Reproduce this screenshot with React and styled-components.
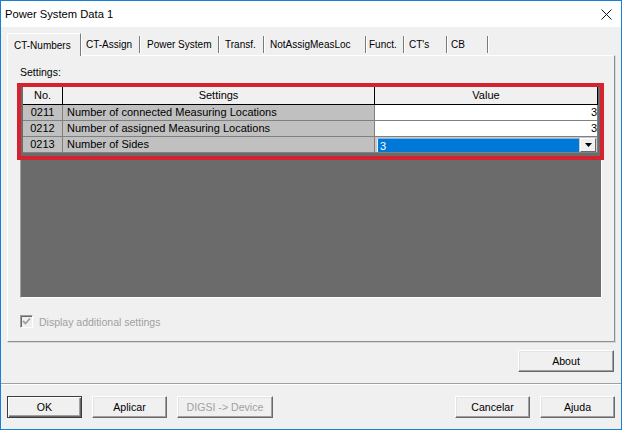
import styled, { createGlobalStyle } from "styled-components";

const GlobalStyle = createGlobalStyle`
  html, body {
    margin: 0;
    padding: 0;
    background: #ffffff;
  }
  body {
    font-family: "Liberation Sans", Arial, sans-serif;
    color: #000;
  }
  * {
    box-sizing: border-box;
  }
`;

const Window = styled.div`
  width: 622px;
  height: 430px;
  border: 1px solid #1a7fd4;
  background: #f0f0f0;
  display: flex;
  flex-direction: column;
`;

const TitleBar = styled.div`
  height: 26px;
  background: #ffffff;
  display: flex;
  align-items: center;
  justify-content: space-between;
  padding: 0 9px 0 4px;
  font-size: 11.2px;
  color: #000;
`;

const CloseIcon = styled.svg`
  width: 11px;
  height: 11px;
  display: block;
`;

const Body = styled.div`
  display: flex;
  flex-direction: column;
  padding: 6px 6px 11px 6px;
`;

const TabRow = styled.div`
  height: 22px;
  display: flex;
  align-items: stretch;
  font-size: 10px;
`;

const Tab = styled.div`
  width: ${(p) => p.$w}px;
  padding-left: ${(p) => p.$pad}px;
  display: flex;
  align-items: center;
  white-space: nowrap;
  margin: ${(p) => (p.$active ? "0" : "3px 0 2px 0")};
  border-right: 1px solid #7a7a7a;
  box-shadow: 1px 0 0 #ffffff;
  ${(p) =>
    p.$active &&
    `
    border-top: 1px solid #ffffff;
    border-left: 1px solid #ffffff;
    background: #f0f0f0;
    padding-bottom: 0;
    margin-bottom: -1px;
    position: relative;
    z-index: 1;
  `}
`;

const Panel = styled.div`
  height: 287px;
  border-top: 1px solid #ffffff;
  border-left: 1px solid #ffffff;
  border-right: 1px solid #8e8e8e;
  border-bottom: 1px solid #8e8e8e;
  box-shadow: 1px 1px 0 #d8d8d8;
  padding: 10px 12px 0 12px;
  display: flex;
  flex-direction: column;
`;

const Label = styled.div`
  font-size: 10.5px;
  line-height: 13px;
  height: 13px;
`;

const Grid = styled.div`
  position: relative;
  margin-top: 5px;
  height: 214px;
  background: #6b6b6b;
  border-top: 1px solid #a0a0a0;
  border-left: 1px solid #a0a0a0;
  border-right: 1px solid #ffffff;
  border-bottom: 1px solid #ffffff;
  padding: 1px 3px 0 2px;
`;

const Table = styled.div`
  display: grid;
  grid-template-columns: 40px 312px 1fr;
  font-size: 11px;
`;

const HeadCell = styled.div`
  height: 19px;
  line-height: 18px;
  background: #f0f0f0;
  text-align: center;
  border-right: 1px solid #000;
  border-bottom: 1px solid #000;
`;

const Cell = styled.div`
  height: 16px;
  line-height: 15px;
  border-bottom: 1px solid #808080;
  border-right: 1px solid #808080;
  background: ${(p) => (p.$white ? "#ffffff" : "#c0c0c0")};
  text-align: ${(p) => p.$align || "left"};
  padding: ${(p) => p.$pad || "0"};
  white-space: nowrap;
  overflow: hidden;
`;

const ComboCell = styled.div`
  height: 16px;
  border-bottom: 1px solid #808080;
  border-right: 1px solid #808080;
  background: #c8c8c8;
  padding: 1px 1px 0 2px;
  display: flex;
`;

const ComboField = styled.div`
  flex: 1;
  background: #0078d7;
  color: #ffffff;
  border-left: 1px solid #e8f0fa;
  border-top: 1px solid #7fb6e8;
  line-height: 14px;
  padding-left: 2px;
`;

const ComboButton = styled.div`
  width: 16px;
  margin-left: 1px;
  background: #f0f0f0;
  border-top: 1px solid #ffffff;
  border-left: 1px solid #ffffff;
  border-right: 1px solid #696969;
  border-bottom: 1px solid #696969;
  display: flex;
  align-items: center;
  justify-content: center;
`;

const Highlight = styled.div`
  position: absolute;
  left: -4px;
  top: -2px;
  width: 587px;
  height: 77px;
  border: 4px solid #d42330;
  pointer-events: none;
`;

const CheckRow = styled.div`
  margin-top: 17px;
  display: flex;
  align-items: center;
  gap: 6px;
  height: 13px;
  padding-left: 0;
  font-size: 10.5px;
  color: #a0a0a0;
`;

const CheckBox = styled.div`
  width: 13px;
  height: 13px;
  border-top: 1px solid #a0a0a0;
  border-left: 1px solid #a0a0a0;
  border-right: 1px solid #ffffff;
  border-bottom: 1px solid #ffffff;
  box-shadow: inset 1px 1px 0 #696969;
  background: #f0f0f0;
  display: flex;
  align-items: center;
  justify-content: center;
`;

const AboutRow = styled.div`
  margin-top: 8px;
  display: flex;
  justify-content: flex-end;
  padding-right: 1px;
`;

const Button = styled.div`
  width: ${(p) => p.$w || 75}px;
  height: 22px;
  display: flex;
  align-items: center;
  justify-content: center;
  font-size: 10.6px;
  background: #f0f0f0;
  color: ${(p) => (p.$disabled ? "#a0a0a0" : "#000")};
  border: 1px solid ${(p) => (p.$default ? "#3c3c3c" : "#f0f0f0")};
  border-top-color: ${(p) => (p.$default ? "#3c3c3c" : "#ffffff")};
  border-left-color: ${(p) => (p.$default ? "#3c3c3c" : "#ffffff")};
  border-right-color: ${(p) => (p.$default ? "#3c3c3c" : "#696969")};
  border-bottom-color: ${(p) => (p.$default ? "#3c3c3c" : "#696969")};
  box-shadow: ${(p) =>
    p.$default
      ? "inset 1px 1px 0 #ffffff, inset -1px -1px 0 #696969, inset -2px -2px 0 #a0a0a0"
      : "inset -1px -1px 0 #a0a0a0, inset 1px 1px 0 #e3e3e3"};
`;

const Separator = styled.div`
  height: 2px;
  border-top: 1px solid #a0a0a0;
  border-bottom: 1px solid #ffffff;
`;

const Footer = styled.div`
  display: flex;
  align-items: center;
  padding: 11px 6px 11px 6px;
  gap: 10px;
`;

const Spacer = styled.div`
  flex: 1;
`;

const tabs = [
  { label: "CT-Numbers", w: 74, pad: 6, active: true },
  { label: "CT-Assign", w: 59, pad: 5 },
  { label: "Power System", w: 79, pad: 7 },
  { label: "Transf.", w: 45, pad: 6 },
  { label: "NotAssigMeasLoc", w: 102, pad: 6 },
  { label: "Funct.", w: 38, pad: 3 },
  { label: "CT's", w: 43, pad: 5 },
  { label: "CB", w: 41, pad: 4 },
];

const rows = [
  { no: "0211", text: "Number of connected Measuring Locations", value: "3" },
  { no: "0212", text: "Number of assigned Measuring Locations", value: "3" },
  { no: "0213", text: "Number of Sides", value: "3", combo: true },
];

const App = () => {
  return (
    <>
      <GlobalStyle />
      <Window>
        <TitleBar>
          <span>Power System Data 1</span>
          <CloseIcon viewBox="0 0 11 11">
            <path d="M0.5 0.5 L10.5 10.5 M10.5 0.5 L0.5 10.5" stroke="#111" strokeWidth="1" fill="none" />
          </CloseIcon>
        </TitleBar>
        <Body>
          <TabRow>
            {tabs.map((t) => (
              <Tab key={t.label} $w={t.w} $pad={t.pad} $active={t.active}>
                {t.label}
              </Tab>
            ))}
          </TabRow>
          <Panel>
            <Label>Settings:</Label>
            <Grid>
              <Table>
                <HeadCell>No.</HeadCell>
                <HeadCell>Settings</HeadCell>
                <HeadCell>Value</HeadCell>
                {rows.map((r) => [
                  <Cell key={r.no + "n"} $align="center">
                    {r.no}
                  </Cell>,
                  <Cell key={r.no + "t"} $pad="0 0 0 4px">
                    {r.text}
                  </Cell>,
                  r.combo ? (
                    <ComboCell key={r.no + "v"}>
                      <ComboField>{r.value}</ComboField>
                      <ComboButton>
                        <svg width="7" height="4" viewBox="0 0 7 4">
                          <path d="M0 0 H7 L3.5 4 Z" fill="#000" />
                        </svg>
                      </ComboButton>
                    </ComboCell>
                  ) : (
                    <Cell key={r.no + "v"} $white $align="right" $pad="0 0 0 0">
                      {r.value}
                    </Cell>
                  ),
                ])}
              </Table>
              <Highlight />
            </Grid>
            <CheckRow>
              <CheckBox>
                <svg width="9" height="9" viewBox="0 0 9 9">
                  <path d="M1 4 L3.5 6.5 L8 1.5" stroke="#a0a0a0" strokeWidth="1.8" fill="none" />
                </svg>
              </CheckBox>
              <span>Display additional settings</span>
            </CheckRow>
          </Panel>
          <AboutRow>
            <Button $w={96}>About</Button>
          </AboutRow>
        </Body>
        <Separator />
        <Footer>
          <Button $default>OK</Button>
          <Button>Aplicar</Button>
          <Button $w={96} $disabled>
            DIGSI -&gt; Device
          </Button>
          <Spacer />
          <Button>Cancelar</Button>
          <Button>Ajuda</Button>
        </Footer>
      </Window>
    </>
  );
};

export default App;
